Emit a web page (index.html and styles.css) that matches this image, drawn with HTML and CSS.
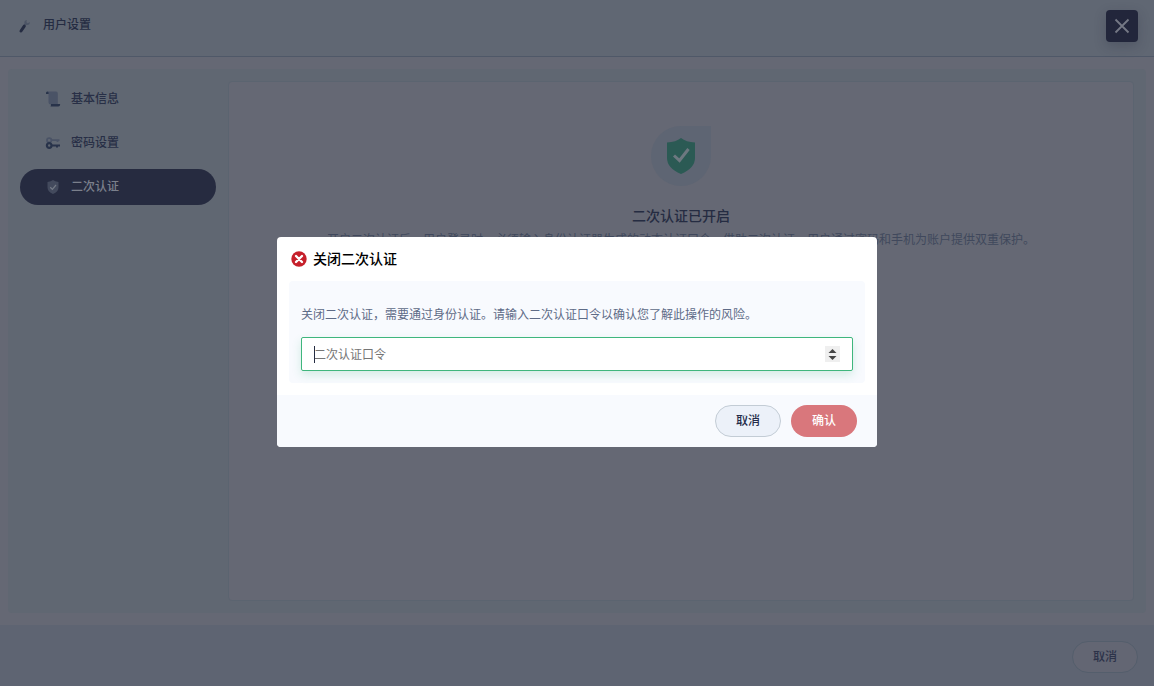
FILE: index.html
```html
<!DOCTYPE html>
<html lang="zh-CN">
<head>
<meta charset="utf-8">
<meta name="viewport" content="width=device-width, initial-scale=1">
<title>用户设置</title>
<link rel="stylesheet" href="styles.css">
</head>
<body>
<div class="page">
  <header class="page-header">
    <svg class="header-icon" viewBox="0 0 16 16" aria-hidden="true">
      <path d="M8.600 7.500 10.300 5" stroke="#4c5465" stroke-width="2.200"/>
      <path d="M9.300 6.500C7.600 4.600 8.600 2.200 10.900 2l-.5 2.200 1.400 1 2-1.200c.4 2.200-1.800 4-4.500 2.500z" fill="#4c5465"/>
      <path d="M5 13 8.300 8.200" stroke="#252c42" stroke-width="3" stroke-linecap="round"/>
    </svg>
    <h1 class="page-title">用户设置</h1>
    <button class="close-button" type="button" aria-label="关闭">
      <svg viewBox="0 0 16 16" aria-hidden="true"><path d="M1.500 1.500l13 13M14.500 1.500l-13 13" stroke="#757985" stroke-width="1.800"/></svg>
    </button>
  </header>
  <main class="page-body">
    <div class="panel">
      <nav class="side-nav">
        <a class="nav-item" href="#basic">
          <svg viewBox="0 0 16 16" aria-hidden="true">
            <path d="M2.500 .5H11q1.800 0 1.800 2V13.500H6Q3.500 13.500 3.500 11V3z" fill="#4a5366"/>
            <path d="M1 3V2Q1 .5 2.300 .5T3.600 2v1zM6 13h9.200q0 2.500-2 2.500H5.500Q6 14.500 6 13z" fill="#28334a"/>
          </svg>
          <span>基本信息</span>
        </a>
        <a class="nav-item" href="#password">
          <svg viewBox="0 0 16 16" aria-hidden="true">
            <circle cx="4.200" cy="5.300" r="2.200" fill="none" stroke="#4a5366" stroke-width="1.800"/>
            <path d="M6.500 5.200H14.500M12.500 5v2" fill="none" stroke="#4a5366" stroke-width="1.800"/>
            <circle cx="4.200" cy="10.500" r="2.300" fill="#606772" stroke="#28334a" stroke-width="2.200"/>
            <path d="M7 10.400h8M12 10.500v2" fill="none" stroke="#28334a" stroke-width="2"/>
          </svg>
          <span>密码设置</span>
        </a>
        <a class="nav-item nav-item-active" href="#two-factor" aria-current="page">
          <svg viewBox="0 0 16 16" aria-hidden="true">
            <path d="M8 1Q10 2.700 13.500 3v5.500Q13.500 12.500 8 15 2.500 12.500 2.500 8.500V3Q6 2.700 8 1z" fill="#434a5d"/>
            <path d="M5.200 8.200l2.200 2.100L11 6" fill="none" stroke="#747a86" stroke-width="1.200"/>
          </svg>
          <span>二次认证</span>
        </a>
      </nav>
      <section class="card">
        <div class="status-badge">
          <svg viewBox="0 0 28 36" aria-hidden="true">
            <path d="M14 0Q19 4 28 4.500V20Q28 30 14 36 0 30 0 20V4.500Q9 4 14 0z" fill="#2b5a54"/>
            <path d="M7 17.500l5.500 5L21.500 11" fill="none" stroke="#6d7880" stroke-width="3"/>
          </svg>
        </div>
        <h2 class="status-title">二次认证已开启</h2>
        <p class="status-text">开启二次认证后，用户登录时，必须输入身份认证器生成的动态认证口令。借助二次认证，用户通过密码和手机为账户提供双重保护。</p>
      </section>
    </div>
  </main>
  <footer class="page-footer">
    <button class="button button-dimmed" type="button">取消</button>
  </footer>
</div>
<div class="overlay">
  <form class="dialog" role="dialog" aria-modal="true" aria-labelledby="dialog-title">
    <div class="dialog-header">
      <svg viewBox="0 0 16 16" aria-hidden="true">
        <circle cx="8" cy="8" r="7.700" fill="#c6202b"/>
        <path d="M5 5l6 6M11 5l-6 6" stroke="#fff" stroke-width="2.400" stroke-linecap="round"/>
      </svg>
      <h2 class="dialog-title" id="dialog-title">关闭二次认证</h2>
    </div>
    <div class="dialog-body">
      <label class="dialog-label" for="code">关闭二次认证，需要通过身份认证。请输入二次认证口令以确认您了解此操作的风险。</label>
      <div class="code-field">
        <input class="code-input" id="code" type="number" placeholder="二次认证口令">
        <span class="caret" aria-hidden="true"></span>
      </div>
    </div>
    <div class="dialog-footer">
      <button class="button button-cancel" type="button">取消</button>
      <button class="button button-confirm" type="submit">确认</button>
    </div>
  </form>
</div>
</body>
</html>
```
FILE: styles.css
```css
* {
  box-sizing: border-box;
}

body {
  margin: 0;
  background: #656874;
  color: #252c42;
  font-family: "Liberation Sans", "Noto Sans CJK SC", sans-serif;
  font-size: 12px;
  line-height: 18px;
}

h1,
h2,
p {
  margin: 0;
}

.page {
  display: flex;
  flex-direction: column;
  min-height: 100vh;
}

.page-header {
  display: flex;
  align-items: flex-start;
  gap: 11px;
  padding: 10px 16px 14px;
  background: #606773;
  border-bottom: 1px solid #4f5868;
}

.header-icon {
  width: 16px;
  height: 16px;
  margin-top: 8px;
}

.page-title {
  flex: 1;
  padding-top: 6px;
  font-size: 12px;
  font-weight: 500;
}

.close-button {
  display: flex;
  align-items: center;
  justify-content: center;
  width: 32px;
  height: 32px;
  padding: 0;
  border: 0;
  border-radius: 4px;
  background: #22263b;
  box-shadow: 0 4px 12px rgba(34, 38, 59, 0.25);
}

.close-button svg {
  width: 16px;
  height: 16px;
}

.page-body {
  display: flex;
  flex: 1;
  padding: 12px 8px;
}

.panel {
  display: flex;
  flex: 1;
  gap: 12px;
  padding: 12px;
  border-radius: 4px;
  background: #606772;
}

.side-nav {
  display: flex;
  flex-direction: column;
  gap: 8px;
  width: 196px;
}

.nav-item {
  display: flex;
  align-items: center;
  gap: 10px;
  height: 36px;
  padding: 0 25px;
  border-radius: 18px;
  color: #282f46;
  font-weight: 500;
  text-decoration: none;
}

.nav-item svg {
  width: 16px;
  height: 16px;
}

.nav-item-active {
  background: #262b40;
  color: #7b808c;
}

.card {
  display: flex;
  flex: 1;
  flex-direction: column;
  align-items: center;
  padding: 44px 12px;
  border: 1px solid #5b6470;
  border-radius: 4px;
  background: #656874;
}

.status-badge {
  display: flex;
  align-items: center;
  justify-content: center;
  width: 60px;
  height: 60px;
  border-radius: 30px 0 30px 30px;
  background: #5e6573;
}

.status-badge svg {
  width: 28px;
  height: 36px;
}

.status-title {
  margin-top: 20px;
  font-size: 14px;
  font-weight: 500;
  line-height: 20px;
}

.status-text {
  margin-top: 5px;
  color: #40485c;
}

.page-footer {
  display: flex;
  justify-content: flex-end;
  padding: 16px 16px 13px;
  background: #5e6472;
}

.button {
  width: 66px;
  height: 32px;
  padding: 0;
  border: 1px solid transparent;
  border-radius: 16px;
  font: inherit;
  font-weight: 500;
}

.button-dimmed {
  border-color: #545e6c;
  background: #636673;
  color: #2d334a;
}

.overlay {
  position: fixed;
  inset: 0;
  display: flex;
  align-items: center;
  justify-content: center;
  padding: 0 16px 2px;
}

.dialog {
  width: 600px;
  max-width: 100%;
  overflow: hidden;
  border-radius: 4px;
  background: #fff;
}

.dialog-header {
  display: flex;
  align-items: center;
  gap: 6px;
  height: 44px;
  padding: 0 14px;
}

.dialog-header svg {
  width: 16px;
  height: 16px;
}

.dialog-title {
  color: #000;
  font-size: 14px;
  font-weight: 500;
  line-height: 20px;
}

.dialog-body {
  display: flex;
  flex-direction: column;
  gap: 13px;
  margin: 0 12px 12px;
  padding: 25px 12px 12px;
  border-radius: 4px;
  background: #f8fafe;
}

.dialog-label {
  color: #5e6b87;
}

.code-field {
  position: relative;
}

.code-input {
  display: block;
  width: 100%;
  height: 34px;
  padding: 2px 12px 0;
  border: 1px solid #3fb67d;
  border-radius: 2px;
  outline: 0;
  background: #fff;
  box-shadow: 0 4px 10px rgba(63, 182, 125, 0.2);
  color: #252c42;
  font: inherit;
}

.code-input::placeholder {
  color: #757575;
}

.code-input::-webkit-inner-spin-button {
  appearance: none;
  -webkit-appearance: none;
  width: 15px;
  height: 16px;
  margin: 0 0 2px;
  opacity: 1;
  background: #efefef url("data:image/svg+xml,%3Csvg xmlns='http://www.w3.org/2000/svg' viewBox='0 0 15 16'%3E%3Cpath d='M3.500 7 7.500 3l4 4zM3.500 10l4 4 4-4z' fill='%23444'/%3E%3C/svg%3E") center / 15px 16px no-repeat;
}

.caret {
  position: absolute;
  top: 9px;
  left: 13px;
  width: 1px;
  height: 17px;
  background: #252c42;
}

.dialog-footer {
  display: flex;
  justify-content: flex-end;
  gap: 10px;
  padding: 10px 20px;
  background: #f8fafe;
}

.button-cancel {
  border-color: #c3ccd5;
  background: #ecf1f9;
  color: #252c4a;
}

.button-confirm {
  background: #d9777c;
  color: #fff;
}
```
